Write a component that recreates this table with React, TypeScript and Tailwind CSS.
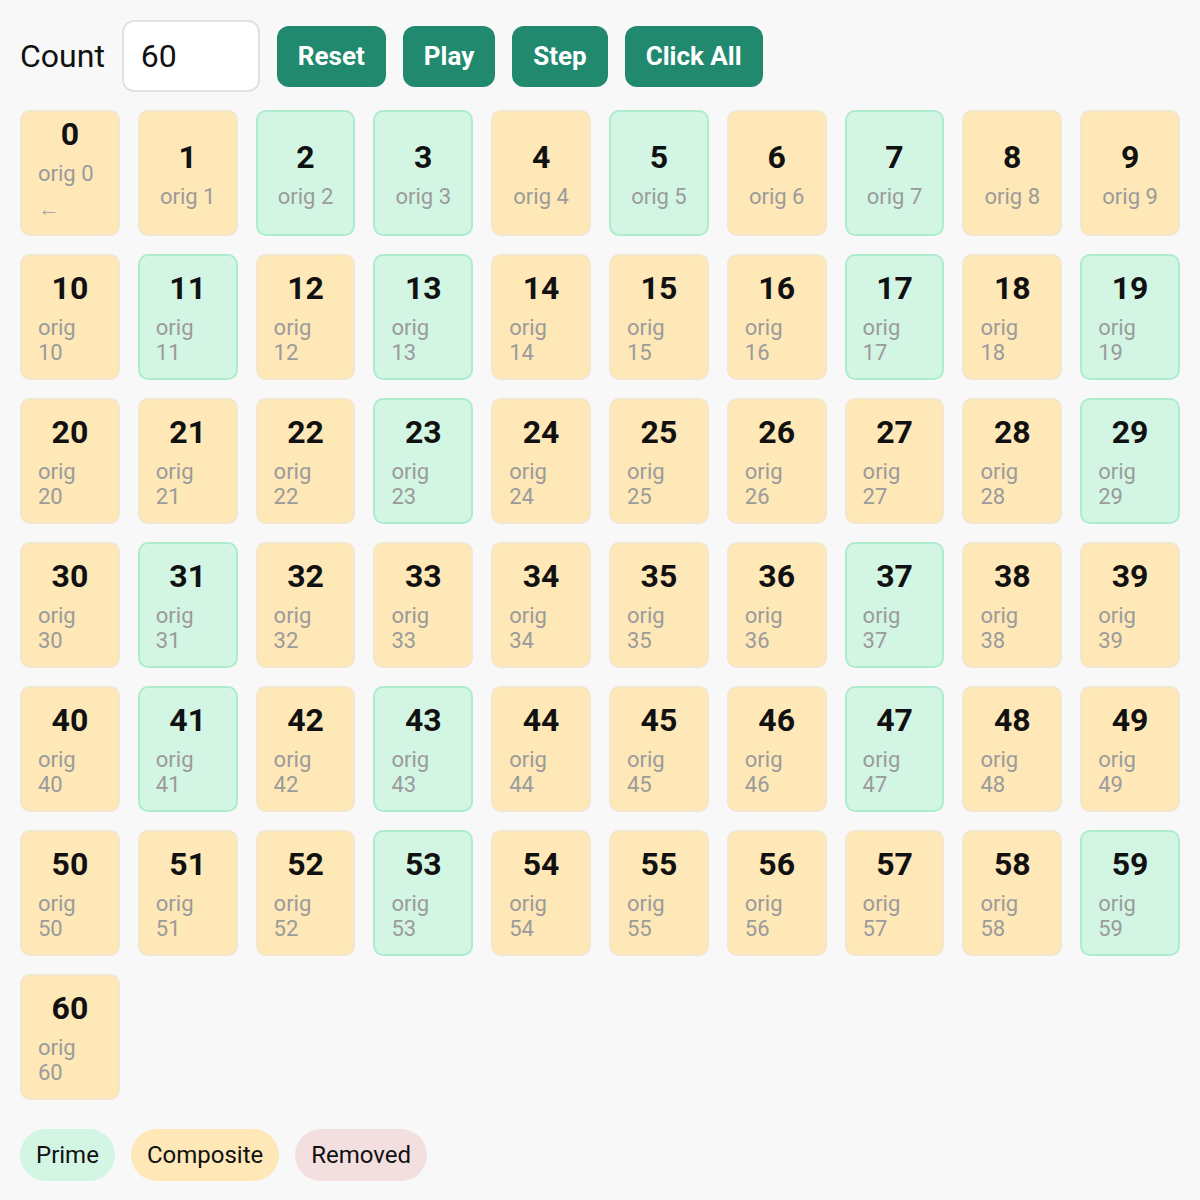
import { useState } from "react";

function isPrime(n: number) {
  if (n < 2) return false;
  for (let i = 2; i * i <= n; i++) if (n % i === 0) return false;
  return true;
}

export default function App() {
  const [count, setCount] = useState("60");
  const n = parseInt(count) || 0;
  const cells = Array.from({ length: n + 1 }, (_, i) => i);

  return (
    <main className="min-h-screen bg-[#f8f8f9] p-5 font-['Roboto',sans-serif] text-[#111]">
      <div className="flex items-center gap-[17px]">
        <label className="text-[32px]">Count</label>
        <input
          value={count}
          onChange={(e) => setCount(e.target.value)}
          className="h-[72px] w-[138px] rounded-xl border-2 border-[#e2e2e2] bg-white px-[17px] text-[32px] outline-none"
        />
        {["Reset", "Play", "Step", "Click All"].map((b) => (
          <button
            key={b}
            type="button"
            className="h-[61px] rounded-xl bg-[#218a6e] px-[21px] text-[26px] font-bold text-white"
          >
            {b}
          </button>
        ))}
      </div>

      <div className="mt-[18px] grid grid-cols-10 gap-[18px]">
        {cells.map((i) => {
          const prime = isPrime(i);
          return (
            <div
              key={i}
              className={`flex h-[126px] flex-col items-center justify-center rounded-[10px] border-2 px-[16px] ${
                prime
                  ? "border-[#aeecce] bg-[#d3f5e4]"
                  : "border-[#f3e6ca] bg-[#fee8b7]"
              }`}
            >
              <div className="text-[32px] font-bold leading-[38px]">{i}</div>
              <div className="mt-[8px] text-[22px] leading-[25px] text-[#9b9b9b]">
                orig {i}
                {i === 0 && (
                  <>
                    {" "}
                    <span className="text-[22px] leading-[46px] text-[#a8a8a8]">←</span>
                  </>
                )}
              </div>
            </div>
          );
        })}
      </div>

      <div className="mt-[29px] flex gap-4">
        <span className="rounded-full bg-[#d3f5e4] px-4 py-[12px] text-[24px] leading-[28px]">Prime</span>
        <span className="rounded-full bg-[#fee8b7] px-4 py-[12px] text-[24px] leading-[28px]">Composite</span>
        <span className="rounded-full bg-[#f3dfe0] px-4 py-[12px] text-[24px] leading-[28px]">Removed</span>
      </div>
    </main>
  );
}
